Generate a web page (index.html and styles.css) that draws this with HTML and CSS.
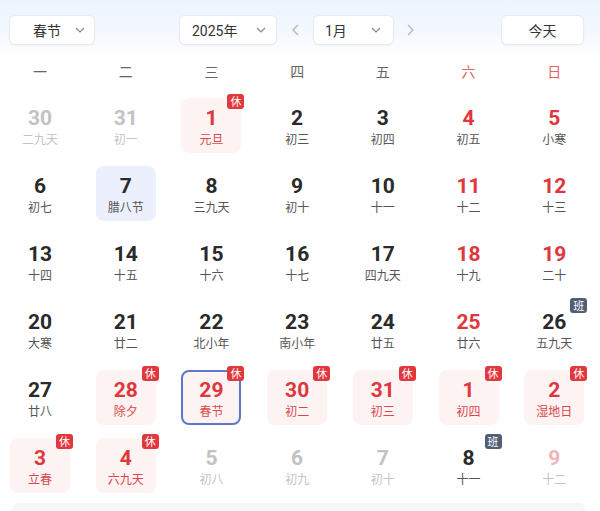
FILE: index.html
```html
<!DOCTYPE html>
<html lang="zh">
<head>
<meta charset="utf-8">
<link rel="stylesheet" href="styles.css">
</head>
<body>
<div class="cal">
  <div class="header">
    <div class="select sel-fest"><span>春节</span><svg class="chev" viewBox="0 0 10 6"><path d="M1 1l4 4 4-4"/></svg></div>
    <div class="select sel-year"><span>2025年</span><svg class="chev" viewBox="0 0 10 6"><path d="M1 1l4 4 4-4"/></svg></div>
    <div class="arrow arrow-l"><svg viewBox="0 0 7 12"><path d="M6 1L1 6l5 5"/></svg></div>
    <div class="select sel-month"><span>1月</span><svg class="chev" viewBox="0 0 10 6"><path d="M1 1l4 4 4-4"/></svg></div>
    <div class="arrow arrow-r"><svg viewBox="0 0 7 12"><path d="M1 1l5 5-5 5"/></svg></div>
    <div class="today">今天</div>
  </div>
  <div class="weekdays">
    <div class="wd">一</div><div class="wd">二</div><div class="wd">三</div><div class="wd">四</div><div class="wd">五</div><div class="wd weekend">六</div><div class="wd weekend">日</div>
  </div>
  <div class="days">
    <div class="day other"><div class="num">30</div><div class="lunar">二九天</div></div>
    <div class="day other"><div class="num">31</div><div class="lunar">初一</div></div>
    <div class="day hol"><div class="num">1</div><div class="lunar">元旦</div><span class="badge">休</span></div>
    <div class="day"><div class="num">2</div><div class="lunar">初三</div></div>
    <div class="day"><div class="num">3</div><div class="lunar">初四</div></div>
    <div class="day red"><div class="num">4</div><div class="lunar">初五</div></div>
    <div class="day red"><div class="num">5</div><div class="lunar">小寒</div></div>

    <div class="day"><div class="num">6</div><div class="lunar">初七</div></div>
    <div class="day today-cell"><div class="num">7</div><div class="lunar">腊八节</div></div>
    <div class="day"><div class="num">8</div><div class="lunar">三九天</div></div>
    <div class="day"><div class="num">9</div><div class="lunar">初十</div></div>
    <div class="day"><div class="num">10</div><div class="lunar">十一</div></div>
    <div class="day red"><div class="num">11</div><div class="lunar">十二</div></div>
    <div class="day red"><div class="num">12</div><div class="lunar">十三</div></div>

    <div class="day"><div class="num">13</div><div class="lunar">十四</div></div>
    <div class="day"><div class="num">14</div><div class="lunar">十五</div></div>
    <div class="day"><div class="num">15</div><div class="lunar">十六</div></div>
    <div class="day"><div class="num">16</div><div class="lunar">十七</div></div>
    <div class="day"><div class="num">17</div><div class="lunar">四九天</div></div>
    <div class="day red"><div class="num">18</div><div class="lunar">十九</div></div>
    <div class="day red"><div class="num">19</div><div class="lunar">二十</div></div>

    <div class="day"><div class="num">20</div><div class="lunar">大寒</div></div>
    <div class="day"><div class="num">21</div><div class="lunar">廿二</div></div>
    <div class="day"><div class="num">22</div><div class="lunar">北小年</div></div>
    <div class="day"><div class="num">23</div><div class="lunar">南小年</div></div>
    <div class="day"><div class="num">24</div><div class="lunar">廿五</div></div>
    <div class="day red"><div class="num">25</div><div class="lunar">廿六</div></div>
    <div class="day"><div class="num">26</div><div class="lunar">五九天</div><span class="badge work">班</span></div>

    <div class="day"><div class="num">27</div><div class="lunar">廿八</div></div>
    <div class="day hol"><div class="num">28</div><div class="lunar">除夕</div><span class="badge">休</span></div>
    <div class="day hol selected"><div class="num">29</div><div class="lunar">春节</div><span class="badge">休</span></div>
    <div class="day hol"><div class="num">30</div><div class="lunar">初二</div><span class="badge">休</span></div>
    <div class="day hol"><div class="num">31</div><div class="lunar">初三</div><span class="badge">休</span></div>
    <div class="day hol"><div class="num">1</div><div class="lunar">初四</div><span class="badge">休</span></div>
    <div class="day hol"><div class="num">2</div><div class="lunar">湿地日</div><span class="badge">休</span></div>

    <div class="day hol"><div class="num">3</div><div class="lunar">立春</div><span class="badge">休</span></div>
    <div class="day hol"><div class="num">4</div><div class="lunar">六九天</div><span class="badge">休</span></div>
    <div class="day other"><div class="num">5</div><div class="lunar">初八</div></div>
    <div class="day other"><div class="num">6</div><div class="lunar">初九</div></div>
    <div class="day other"><div class="num">7</div><div class="lunar">初十</div></div>
    <div class="day"><div class="num">8</div><div class="lunar">十一</div><span class="badge work">班</span></div>
    <div class="day other other-red"><div class="num">9</div><div class="lunar">十二</div></div>
  </div>
  <div class="footer"></div>
</div>
</body>
</html>
```

FILE: styles.css
```css
* { box-sizing: border-box; }
html, body { margin: 0; padding: 0; background: #fff; }
body {
  width: 600px;
  height: 511px;
  overflow: hidden;
  font-family: Roboto, "Noto Sans CJK SC", sans-serif;
  color: #333;
}
.cal { width: 600px; }

.header {
  height: 58px;
  padding: 15px 16px 0 9px;
  display: flex;
  align-items: flex-start;
  background: linear-gradient(to bottom, #eaf4fd 0%, #f5f9fe 60%, #ffffff 100%);
}
.select, .today {
  height: 30px;
  background: #fff;
  border: 1px solid #e8ebef;
  border-radius: 6px;
  box-shadow: 0 1px 2px rgba(0, 0, 0, 0.04);
  display: flex;
  align-items: center;
  font-size: 14px;
  color: #333;
}
.select span { flex: 1; }
.chev {
  width: 10px;
  height: 6px;
  fill: none;
  stroke: #8a8a8a;
  stroke-width: 1.2;
}
.sel-fest { width: 86px; padding: 0 9px 0 23px; }
.sel-year { width: 98px; padding: 0 10px 0 12px; margin-left: 84px; }
.sel-month { width: 81px; padding: 0 12px 0 11px; }
.arrow {
  height: 30px;
  display: flex;
  align-items: center;
  justify-content: center;
}
.arrow svg {
  width: 7px;
  height: 12px;
  fill: none;
  stroke: #b4b4b4;
  stroke-width: 1.3;
}
.arrow-l { width: 36px; }
.arrow-r { width: 32px; }
.today {
  margin-left: auto;
  width: 83px;
  justify-content: center;
}

.weekdays, .days {
  display: grid;
  grid-template-columns: repeat(7, 1fr);
}
.weekdays { height: 28px; }
.wd {
  width: 60px;
  margin-left: 10px;
  text-align: center;
  line-height: 28px;
  font-size: 14px;
  color: #666;
}
.wd.weekend { color: #e06464; }

.days {
  margin-top: 12px;
  row-gap: 13px;
}
.day {
  position: relative;
  width: 60px;
  height: 55px;
  margin-left: 10px;
  border-radius: 8px;
  padding-top: 8px;
  text-align: center;
}
.num {
  font-size: 21px;
  font-weight: 700;
  line-height: 24px;
  color: #2a2a2a;
}
.lunar {
  margin-top: 1px;
  font-size: 12px;
  line-height: 16px;
  color: #555;
  font-family: "Noto Sans CJK SC", sans-serif;
}
.day.red .num { color: #e0363d; }
.day.other .num { color: #c2c2c2; }
.day.other .lunar { color: #c4c4c4; }
.day.other-red .num { color: #f2b6b6; }
.day.hol { background: #fdf3f2; }
.day.hol .num { color: #e0363d; }
.day.hol .lunar { color: #d9474d; }
.day.today-cell { background: #ecf0fc; }
.day.selected { border: 2px solid #5d77cf; padding-top: 6px; }

.badge {
  position: absolute;
  top: -4px;
  right: -3px;
  width: 17px;
  height: 15px;
  border-radius: 3px;
  background: #e2373c;
  color: #fff;
  font-size: 11px;
  line-height: 15px;
  text-align: center;
  font-family: "Noto Sans CJK SC", sans-serif;
}
.day.selected .badge { top: -6px; right: -5px; }
.badge.work { background: #535d78; }

.footer {
  margin: 10px 14px 0 12px;
  height: 8px;
  background: #f7f7f7;
  border-radius: 8px 8px 0 0;
}
```
